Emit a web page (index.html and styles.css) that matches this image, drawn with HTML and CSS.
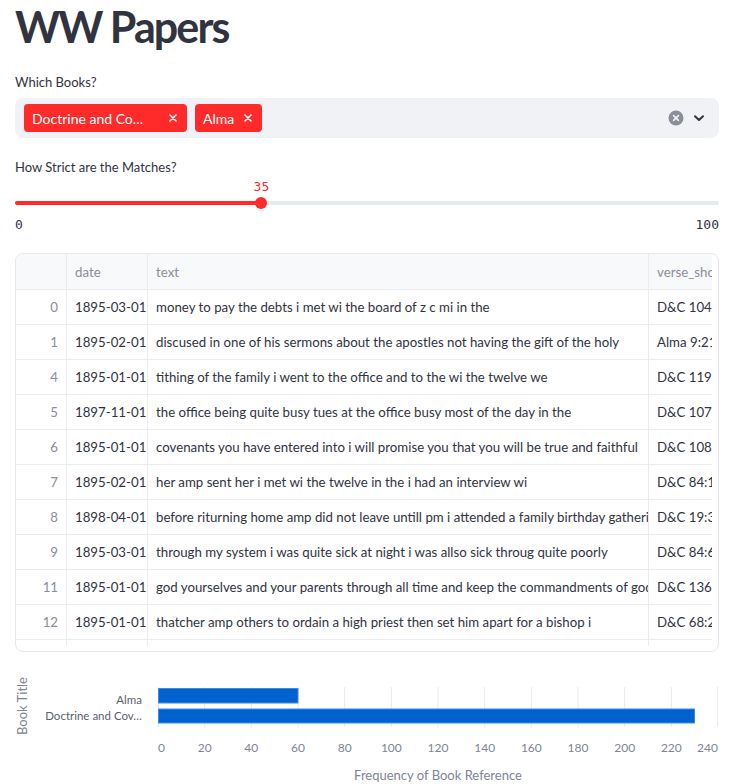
FILE: index.html
```html
<!DOCTYPE html>
<html lang="en">
<head>
<meta charset="utf-8">
<title>WW Papers</title>
<link rel="stylesheet" href="styles.css">
</head>
<body>
<main class="app">
  <h1 class="title">WW Papers</h1>

  <div class="field">
    <div class="label">Which Books?</div>
    <div class="multiselect">
      <div class="tags">
        <span class="tag"><span class="tag-text tag-text-long">Doctrine and Co…</span><svg class="tag-x" width="8" height="8" viewBox="0 0 8 8"><path d="M1 1L7 7M7 1L1 7" stroke="#fff" stroke-width="1.6" stroke-linecap="round"/></svg></span>
        <span class="tag"><span class="tag-text">Alma</span><svg class="tag-x" width="8" height="8" viewBox="0 0 8 8"><path d="M1 1L7 7M7 1L1 7" stroke="#fff" stroke-width="1.6" stroke-linecap="round"/></svg></span>
      </div>
      <div class="controls">
        <svg width="16" height="16" viewBox="0 0 16 16"><circle cx="8" cy="8" r="7.5" fill="#8b8d99"/><path d="M5.6 5.6L10.4 10.4M10.4 5.6L5.6 10.4" stroke="#f0f2f6" stroke-width="1.6" stroke-linecap="round"/></svg>
        <svg width="12" height="12" viewBox="0 0 12 12"><path d="M2 4.2L6 8L10 4.2" fill="none" stroke="#31333f" stroke-width="2" stroke-linecap="round" stroke-linejoin="round"/></svg>
      </div>
    </div>
  </div>

  <div class="field slider-field">
    <div class="label">How Strict are the Matches?</div>
    <div class="slider">
      <div class="value-row"><span class="value" style="left:35%">35</span></div>
      <div class="track-area">
        <div class="track"><div class="fill" style="width:35%"></div></div>
        <div class="thumb" style="left:35%"></div>
      </div>
      <div class="ticks"><span>0</span><span>100</span></div>
    </div>
  </div>

  <div class="grid-wrap">
    <div class="grid">
      <div class="row head">
        <div class="c idx"></div>
        <div class="c date">date</div>
        <div class="c text">text</div>
        <div class="c verse">verse_short</div>
      </div>
      <div class="row"><div class="c idx">0</div><div class="c date">1895-03-01</div><div class="c text">money to pay the debts i met wi the board of z c mi in the</div><div class="c verse">D&amp;C 104:78</div></div>
      <div class="row"><div class="c idx">1</div><div class="c date">1895-02-01</div><div class="c text">discused in one of his sermons about the apostles not having the gift of the holy</div><div class="c verse">Alma 9:21</div></div>
      <div class="row"><div class="c idx">4</div><div class="c date">1895-01-01</div><div class="c text">tithing of the family i went to the office and to the wi the twelve we</div><div class="c verse">D&amp;C 119:3</div></div>
      <div class="row"><div class="c idx">5</div><div class="c date">1897-11-01</div><div class="c text">the office being quite busy tues at the office busy most of the day in the</div><div class="c verse">D&amp;C 107:61</div></div>
      <div class="row"><div class="c idx">6</div><div class="c date">1895-01-01</div><div class="c text">covenants you have entered into i will promise you that you will be true and faithful</div><div class="c verse">D&amp;C 108:5</div></div>
      <div class="row"><div class="c idx">7</div><div class="c date">1895-02-01</div><div class="c text">her amp sent her i met wi the twelve in the i had an interview wi</div><div class="c verse">D&amp;C 84:10</div></div>
      <div class="row"><div class="c idx">8</div><div class="c date">1898-04-01</div><div class="c text">before riturning home amp did not leave untill pm i attended a family birthday gathering</div><div class="c verse">D&amp;C 19:36</div></div>
      <div class="row"><div class="c idx">9</div><div class="c date">1895-03-01</div><div class="c text">through my system i was quite sick at night i was allso sick throug quite poorly</div><div class="c verse">D&amp;C 84:68</div></div>
      <div class="row"><div class="c idx">11</div><div class="c date">1895-01-01</div><div class="c text">god yourselves and your parents through all time and keep the commandments of god</div><div class="c verse">D&amp;C 136:2</div></div>
      <div class="row"><div class="c idx">12</div><div class="c date">1895-01-01</div><div class="c text">thatcher amp others to ordain a high priest then set him apart for a bishop i</div><div class="c verse">D&amp;C 68:22</div></div>
      <div class="row"><div class="c idx">13</div><div class="c date">1895-01-01</div><div class="c text">the</div><div class="c verse">D&amp;C 1:1</div></div>
    </div>
  </div>

  <svg class="chart" width="704" height="132" viewBox="0 0 704 132">
    <text class="axis-title" transform="translate(12 54) rotate(-90)" text-anchor="middle">Book Title</text>
    <g class="grid-lines" stroke="#e6e9ef" stroke-width="1">
      <line x1="143.5" y1="35" x2="143.5" y2="75"/>
      <line x1="189.67" y1="35" x2="189.67" y2="75"/>
      <line x1="236.33" y1="35" x2="236.33" y2="75"/>
      <line x1="283" y1="35" x2="283" y2="75"/>
      <line x1="329.67" y1="35" x2="329.67" y2="75"/>
      <line x1="376.33" y1="35" x2="376.33" y2="75"/>
      <line x1="423" y1="35" x2="423" y2="75"/>
      <line x1="469.67" y1="35" x2="469.67" y2="75"/>
      <line x1="516.33" y1="35" x2="516.33" y2="75"/>
      <line x1="563" y1="35" x2="563" y2="75"/>
      <line x1="609.67" y1="35" x2="609.67" y2="75"/>
      <line x1="656.33" y1="35" x2="656.33" y2="75"/>
      <line x1="702.5" y1="35" x2="702.5" y2="75"/>
    </g>
    <rect class="bar" x="143.5" y="36.5" width="139.5" height="14.5"/>
    <rect class="bar" x="143.5" y="57" width="536" height="14"/>
    <text class="ylab" x="127" y="52" text-anchor="end">Alma</text>
    <text class="ylab" x="127" y="68" text-anchor="end">Doctrine and Cov…</text>
    <g class="ticklab">
      <text x="143" y="100" text-anchor="start">0</text>
      <text x="189.67" y="100" text-anchor="middle">20</text>
      <text x="236.33" y="100" text-anchor="middle">40</text>
      <text x="283" y="100" text-anchor="middle">60</text>
      <text x="329.67" y="100" text-anchor="middle">80</text>
      <text x="376.33" y="100" text-anchor="middle">100</text>
      <text x="423" y="100" text-anchor="middle">120</text>
      <text x="469.67" y="100" text-anchor="middle">140</text>
      <text x="516.33" y="100" text-anchor="middle">160</text>
      <text x="563" y="100" text-anchor="middle">180</text>
      <text x="609.67" y="100" text-anchor="middle">200</text>
      <text x="656.33" y="100" text-anchor="middle">220</text>
      <text x="703" y="100" text-anchor="end">240</text>
    </g>
    <text class="axis-title" x="423" y="128" text-anchor="middle">Frequency of Book Reference</text>
  </svg>
</main>
</body>
</html>
```

FILE: styles.css
```css
* { box-sizing: border-box; }

body {
  margin: 0;
  background: #ffffff;
  color: #31333f;
  font-family: "Source Sans Pro", Lato, "Liberation Sans", sans-serif;
}

.app {
  width: 704px;
  margin-left: 15px;
}

.title {
  margin: 0;
  height: 72px;
  font-size: 43px;
  line-height: 53px;
  font-weight: 700;
  color: #31333f;
  letter-spacing: -1.9px;
}

.label {
  height: 20px;
  font-size: 13px;
  line-height: 20px;
  color: #31333f;
}

.multiselect {
  margin-top: 6px;
  height: 40px;
  background: #f0f2f6;
  border-radius: 8px;
  display: flex;
  align-items: center;
  justify-content: space-between;
  padding: 0 14px 0 9px;
}

.tags {
  display: flex;
  gap: 8px;
}

.tag {
  display: inline-flex;
  align-items: center;
  height: 28px;
  padding: 0 10px 0 8px;
  background: #ff2b2b;
  color: #ffffff;
  border-radius: 4px;
  font-size: 14px;
  white-space: nowrap;
}

.tag-text { margin-right: 10px; }
.tag-text-long { display: inline-block; width: 127px; overflow: hidden; }

.controls {
  display: flex;
  align-items: center;
  gap: 9px;
}

.slider-field { margin-top: 19px; }

.slider { padding-top: 2px; }

.value-row {
  position: relative;
  height: 16px;
}

.value {
  position: absolute;
  top: 0;
  transform: translateX(-50%);
  font-family: "DejaVu Sans Mono", "Liberation Mono", monospace;
  font-size: 13px;
  line-height: 16px;
  color: #ff2b2b;
}

.track-area {
  position: relative;
  height: 12px;
  margin-top: 2px;
}

.track {
  position: absolute;
  left: 0;
  right: 0;
  top: 4px;
  height: 4px;
  background: #e6eaf1;
  border-radius: 2px;
}

.fill {
  height: 4px;
  background: #ff2b2b;
  border-radius: 2px;
}

.thumb {
  position: absolute;
  top: 0;
  width: 12px;
  height: 12px;
  margin-left: -6px;
  background: #ff2b2b;
  border-radius: 50%;
}

.ticks {
  margin-top: 8px;
  height: 16px;
  display: flex;
  justify-content: space-between;
  font-family: "DejaVu Sans Mono", "Liberation Mono", monospace;
  font-size: 13px;
  line-height: 16px;
  color: #31333f;
}

.grid-wrap {
  margin-top: 20px;
  height: 399px;
  border: 1px solid #e6e8ed;
  border-radius: 8px;
  overflow: hidden;
}

.grid {
  width: 696px;
  height: 392px;
  overflow: hidden;
}

.row {
  display: flex;
  height: 35px;
  border-bottom: 1px solid #ebecef;
  font-size: 13.25px;
  white-space: nowrap;
}

.row.head {
  height: 36px;
  background: #f8f9fb;
  color: #8b8d98;
}

.c {
  flex: none;
  display: flex;
  align-items: center;
  padding: 0 8px;
  border-right: 1px solid #ebecef;
  overflow: hidden;
}

.idx { width: 51px; justify-content: flex-end; color: #8b8d98; }
.head .idx { justify-content: flex-start; }
.date { width: 81px; }
.text { width: 501px; }
.verse { width: 110px; border-right: none; }

.chart { display: block; }

.chart text {
  font-family: "Source Sans Pro", Lato, "Liberation Sans", sans-serif;
}

.axis-title {
  font-size: 13px;
  fill: #808495;
}

.ylab {
  font-size: 11.5px;
  fill: #5c5f6e;
}

.ticklab text {
  font-size: 12px;
  fill: #808495;
}

.bar {
  fill: #0062cf;
  stroke: #3d8ce3;
  stroke-width: 1;
}
```
